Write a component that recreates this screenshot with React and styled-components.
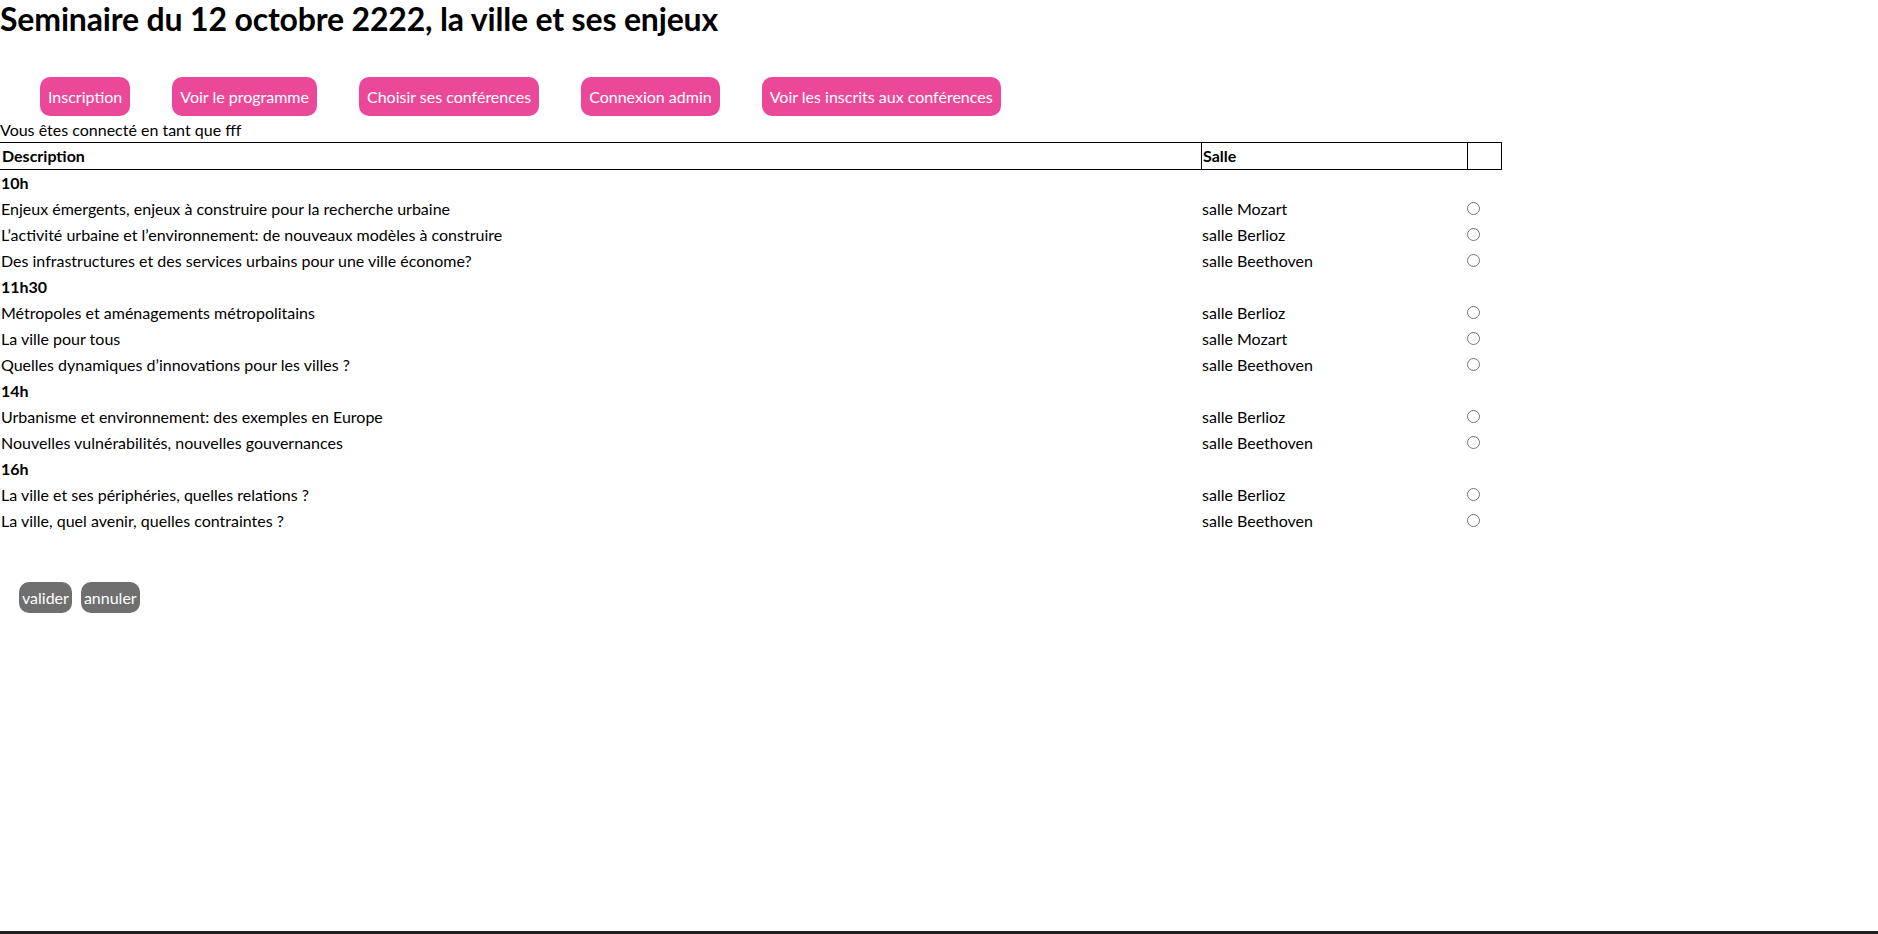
import React from "react";
import styled, { createGlobalStyle } from "styled-components";

const GlobalStyle = createGlobalStyle`
  html, body {
    margin: 0;
    padding: 0;
    background: #ffffff;
  }
  body {
    font-family: "Lato", "Liberation Sans", sans-serif;
    font-size: 16px;
    color: #000000;
  }
  * {
    box-sizing: border-box;
  }
`;

const Page = styled.div`
  min-height: 100vh;
  display: flex;
  flex-direction: column;
`;

const Title = styled.h1`
  margin: 0;
  font-size: 32px;
  font-weight: 700;
  line-height: 38px;
  letter-spacing: -0.17px;
`;

const Nav = styled.nav`
  display: flex;
  gap: 42px;
  margin-top: 39px;
  padding-left: 40px;
`;

const NavButton = styled.a`
  display: inline-flex;
  align-items: center;
  height: 39px;
  padding: 0 8px;
  border-radius: 10px;
  background: #ec4899;
  color: #ffffff;
  font-size: 16px;
  text-decoration: none;
  white-space: nowrap;
  cursor: pointer;
`;

const Status = styled.p`
  margin: 3px 0 0;
  line-height: 22px;
`;

const Table = styled.table`
  margin-top: 1px;
  width: 80%;
  table-layout: fixed;
  border-collapse: separate;
  border-spacing: 0;
`;

const Col = styled.col`
  width: ${(p) => p.$w || "auto"};
`;

const HeadCell = styled.th`
  height: 28px;
  padding: 0 ${(p) => (p.$first ? "2px" : "1px")};
  border-top: 1px solid #000;
  border-bottom: 1px solid #000;
  border-left: ${(p) => (p.$first ? "none" : "1px solid #000")};
  border-right: ${(p) => (p.$last ? "1px solid #000" : "none")};
  text-align: left;
  font-weight: 700;
  line-height: 26px;
  vertical-align: middle;
`;

const Cell = styled.td`
  height: 26px;
  padding: 0 1px;
  line-height: 26px;
  vertical-align: middle;
  white-space: nowrap;
  font-weight: ${(p) => (p.$bold ? 700 : 400)};
`;

const RadioCell = styled.td`
  height: 26px;
  padding: 0 0 1px;
  vertical-align: middle;
  line-height: 0;
`;

const Radio = styled.input.attrs({ type: "radio" })`
  appearance: none;
  -webkit-appearance: none;
  display: block;
  width: 13px;
  height: 13px;
  margin: 0;
  border: 1px solid #767676;
  border-radius: 50%;
  background: #ffffff;
  cursor: pointer;

  &:checked {
    background: radial-gradient(circle, #0075ff 0 3px, #ffffff 3.5px);
    border-color: #0075ff;
  }
`;

const Actions = styled.div`
  display: flex;
  gap: 9px;
  margin-top: 48px;
  padding-left: 19px;
`;

const ActionButton = styled.button`
  height: 31px;
  padding: 0 3px;
  border: none;
  border-radius: 10px;
  background: #6f6f6f;
  color: #ffffff;
  font-family: inherit;
  font-size: 16px;
  cursor: pointer;
`;

const Footer = styled.footer`
  margin-top: auto;
  height: 3px;
  background: #1f1f1f;
`;

const navItems = [
  "Inscription",
  "Voir le programme",
  "Choisir ses conférences",
  "Connexion admin",
  "Voir les inscrits aux conférences",
];

const sessions = [
  {
    time: "10h",
    talks: [
      ["Enjeux émergents, enjeux à construire pour la recherche urbaine", "salle Mozart"],
      ["L’activité urbaine et l’environnement: de nouveaux modèles à construire", "salle Berlioz"],
      ["Des infrastructures et des services urbains pour une ville économe?", "salle Beethoven"],
    ],
  },
  {
    time: "11h30",
    talks: [
      ["Métropoles et aménagements métropolitains", "salle Berlioz"],
      ["La ville pour tous", "salle Mozart"],
      ["Quelles dynamiques d’innovations pour les villes ?", "salle Beethoven"],
    ],
  },
  {
    time: "14h",
    talks: [
      ["Urbanisme et environnement: des exemples en Europe", "salle Berlioz"],
      ["Nouvelles vulnérabilités, nouvelles gouvernances", "salle Beethoven"],
    ],
  },
  {
    time: "16h",
    talks: [
      ["La ville et ses périphéries, quelles relations ?", "salle Berlioz"],
      ["La ville, quel avenir, quelles contraintes ?", "salle Beethoven"],
    ],
  },
];

export default function App() {
  return (
    <>
      <GlobalStyle />
      <Page>
        <Title>Seminaire du 12 octobre 2222, la ville et ses enjeux</Title>
        <Nav>
          {navItems.map((item) => (
            <NavButton key={item}>{item}</NavButton>
          ))}
        </Nav>
        <Status>Vous êtes connecté en tant que fff</Status>
        <form onSubmit={(e) => e.preventDefault()}>
          <Table>
            <colgroup>
              <Col $w="1201px" />
              <Col $w="266px" />
              <Col />
            </colgroup>
            <thead>
              <tr>
                <HeadCell $first>Description</HeadCell>
                <HeadCell>Salle</HeadCell>
                <HeadCell $last />
              </tr>
            </thead>
            <tbody>
              {sessions.map((s) => (
                <React.Fragment key={s.time}>
                  <tr>
                    <Cell $bold colSpan={3}>{s.time}</Cell>
                  </tr>
                  {s.talks.map(([desc, room]) => (
                    <tr key={desc}>
                      <Cell>{desc}</Cell>
                      <Cell>{room}</Cell>
                      <RadioCell>
                        <Radio name={`session-${s.time}`} value={desc} />
                      </RadioCell>
                    </tr>
                  ))}
                </React.Fragment>
              ))}
            </tbody>
          </Table>
          <Actions>
            <ActionButton type="submit">valider</ActionButton>
            <ActionButton type="reset">annuler</ActionButton>
          </Actions>
        </form>
        <Footer />
      </Page>
    </>
  );
}
